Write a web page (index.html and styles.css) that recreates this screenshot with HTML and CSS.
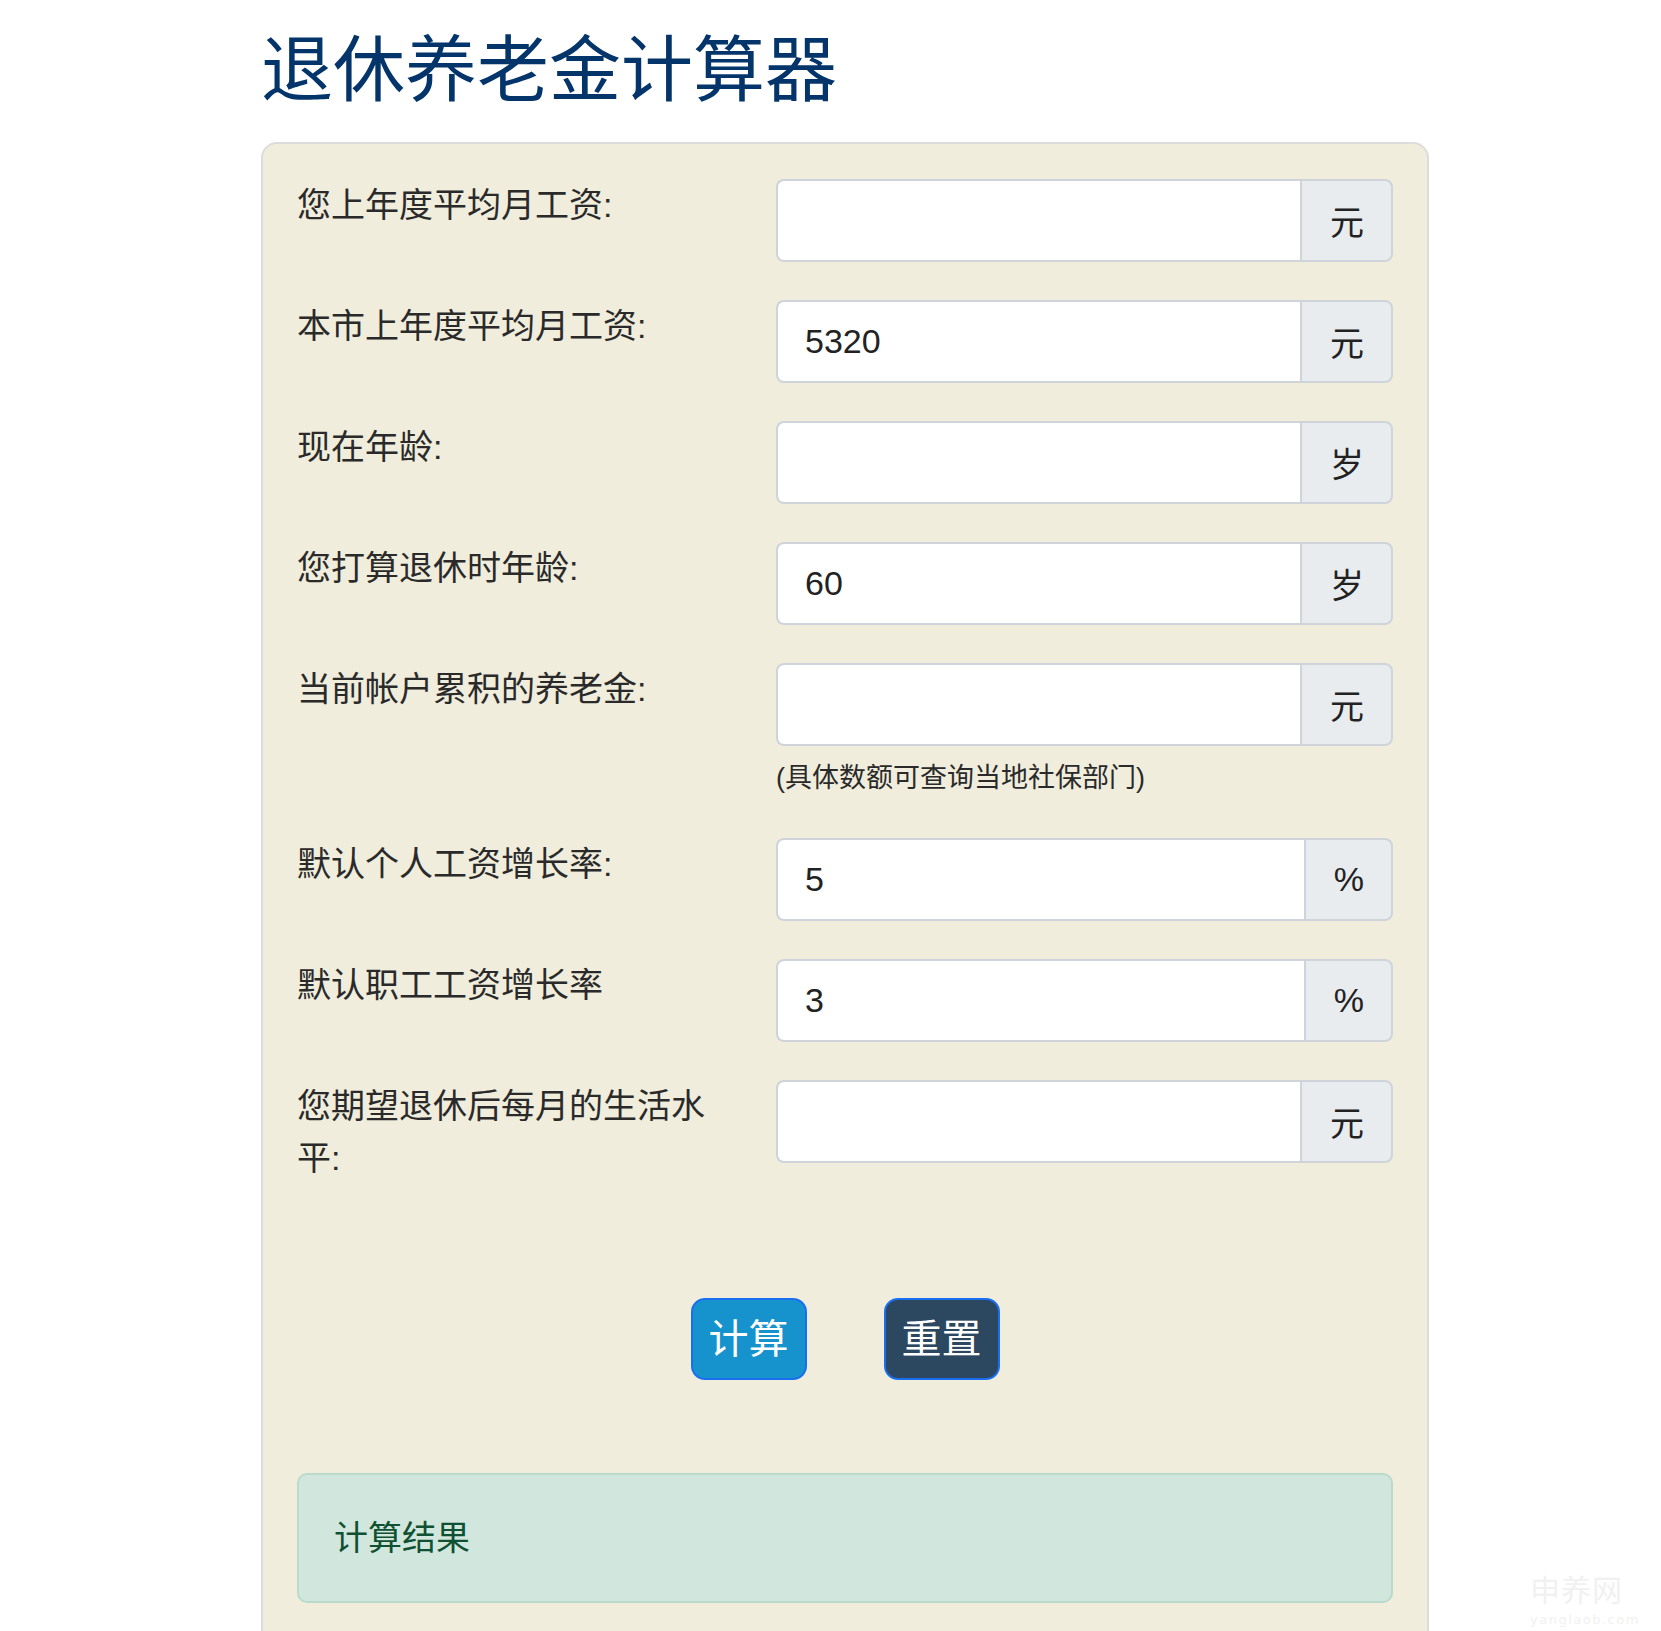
FILE: index.html
```html
<!DOCTYPE html>
<html lang="zh-CN">
<head>
    <meta charset="utf-8">
    <title>退休养老金计算器</title>
    <link rel="stylesheet" href="styles.css">
</head>
<body>
    <div class="page">
        <h1 class="title">退休养老金计算器</h1>

        <div class="calc-card">
            <div class="form-rows">
                <div class="form-row">
                    <label class="row-label" for="my-salary">您上年度平均月工资:</label>
                    <div class="row-field">
                        <div class="input-group">
                            <input type="text" id="my-salary" value="">
                            <span class="addon">元</span>
                        </div>
                    </div>
                </div>

                <div class="form-row">
                    <label class="row-label" for="city-salary">本市上年度平均月工资:</label>
                    <div class="row-field">
                        <div class="input-group">
                            <input type="text" id="city-salary" value="5320">
                            <span class="addon">元</span>
                        </div>
                    </div>
                </div>

                <div class="form-row">
                    <label class="row-label" for="age">现在年龄:</label>
                    <div class="row-field">
                        <div class="input-group">
                            <input type="text" id="age" value="">
                            <span class="addon">岁</span>
                        </div>
                    </div>
                </div>

                <div class="form-row">
                    <label class="row-label" for="retire-age">您打算退休时年龄:</label>
                    <div class="row-field">
                        <div class="input-group">
                            <input type="text" id="retire-age" value="60">
                            <span class="addon">岁</span>
                        </div>
                    </div>
                </div>

                <div class="form-row">
                    <label class="row-label" for="balance">当前帐户累积的养老金:</label>
                    <div class="row-field">
                        <div class="input-group">
                            <input type="text" id="balance" value="">
                            <span class="addon">元</span>
                        </div>
                        <p class="help-text">(具体数额可查询当地社保部门)</p>
                    </div>
                </div>

                <div class="form-row">
                    <label class="row-label" for="my-rate">默认个人工资增长率:</label>
                    <div class="row-field">
                        <div class="input-group">
                            <input type="text" id="my-rate" value="5">
                            <span class="addon">%</span>
                        </div>
                    </div>
                </div>

                <div class="form-row">
                    <label class="row-label" for="staff-rate">默认职工工资增长率</label>
                    <div class="row-field">
                        <div class="input-group">
                            <input type="text" id="staff-rate" value="3">
                            <span class="addon">%</span>
                        </div>
                    </div>
                </div>

                <div class="form-row">
                    <label class="row-label" for="expect">您期望退休后每月的生活水平:</label>
                    <div class="row-field">
                        <div class="input-group">
                            <input type="text" id="expect" value="">
                            <span class="addon">元</span>
                        </div>
                    </div>
                </div>
            </div>

            <div class="actions">
                <button class="btn btn-calc">计算</button>
                <button class="btn btn-reset">重置</button>
            </div>

            <div class="result">计算结果</div>
        </div>
    </div>

    <div class="watermark">
        <span class="wm-name">申养网</span>
        <span class="wm-url">yanglaob.com</span>
    </div>
</body>
</html>
```

FILE: styles.css
```css
body {
    margin: 0;
    background: #fff;
    font-family: "Liberation Sans", "Noto Sans CJK SC", sans-serif;
    color: #2a2a2a;
}
.page {
    width: 1168px;
    margin-left: 261px;
}
.title {
    margin: 27px 0 29px;
    font-size: 72px;
    line-height: 86px;
    font-weight: normal;
    color: #04356a;
}
.calc-card {
    background: #f0eddc;
    border: 2px solid #dcdcdc;
    border-radius: 16px;
    padding: 35px 34px 60px;
}
.form-rows {
    display: flex;
    flex-direction: column;
    gap: 38px;
}
.form-row {
    display: flex;
    align-items: flex-start;
}
.row-label {
    width: 440px;
    margin-right: 39px;
    font-size: 34px;
    line-height: 52px;
    color: #2a2a2a;
}
.row-field {
    flex: 1;
}
.input-group {
    display: flex;
    height: 83px;
}
.input-group input {
    flex: 1;
    min-width: 0;
    box-sizing: border-box;
    height: 100%;
    margin: 0;
    padding: 0 27px;
    border: 2px solid #ced4da;
    border-right: none;
    border-radius: 8px 0 0 8px;
    background: #fff;
    font-family: inherit;
    font-size: 34px;
    color: #222;
    outline: none;
}
.addon {
    display: flex;
    align-items: center;
    padding: 0 27px 0 28px;
    background: #e9ecef;
    border: 2px solid #ced4da;
    border-radius: 0 8px 8px 0;
    font-size: 34px;
    color: #222;
}
.help-text {
    margin: 11px 0 0;
    font-size: 27px;
    line-height: 43px;
    color: #2a2a2a;
}
.actions {
    display: flex;
    justify-content: center;
    gap: 77px;
    margin-top: 114px;
}
.btn {
    height: 82px;
    padding: 0 16px;
    border: 2px solid #1a6ff0;
    border-radius: 14px;
    font-family: inherit;
    font-size: 40px;
    line-height: 78px;
    color: #fff;
    cursor: pointer;
}
.btn-calc {
    background: #1692cd;
}
.btn-reset {
    background: #2c4760;
}
.result {
    margin-top: 93px;
    padding: 37px 35px;
    background: #d1e7dd;
    border: 2px solid #badbcc;
    border-radius: 10px;
    font-size: 34px;
    line-height: 52px;
    color: #0f5132;
}
/* faint site mark in the corner */
.watermark {
    position: absolute;
    left: 1530px;
    top: 1572px;
    display: flex;
    flex-direction: column;
    align-items: flex-start;
    color: #f1f1f1;
    font-family: "Noto Sans CJK SC", sans-serif;
}
.wm-name {
    font-size: 30px;
    line-height: 32px;
    letter-spacing: 1px;
}
.wm-url {
    margin-top: 8px;
    font-family: "DejaVu Sans", sans-serif;
    font-size: 13px;
    line-height: 15px;
    letter-spacing: 1.5px;
}
```
